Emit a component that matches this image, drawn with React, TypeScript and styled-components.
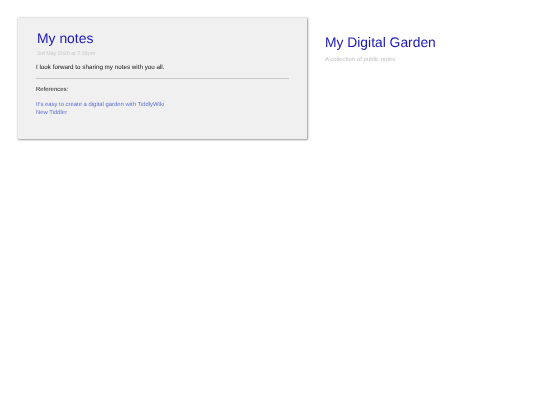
import React from "react";
import styled, { createGlobalStyle } from "styled-components";

const GlobalStyle = createGlobalStyle`
  html, body {
    margin: 0;
    padding: 0;
    background: #fff;
    font-family: "Liberation Sans", Arial, sans-serif;
    text-rendering: geometricPrecision;
  }
`;

const Page = styled.div`
  display: flex;
  align-items: flex-start;
  min-height: 405px;
  box-sizing: border-box;
  padding: 18px 0 0 18px;
  filter: blur(0.25px);
`;

const Card = styled.article`
  box-sizing: border-box;
  width: 289px;
  height: 121px;
  padding: 11px 18px 0 18px;
  background: #f0f0f0;
  border-radius: 1px;
  box-shadow: 0.5px 0.5px 2px rgba(0, 0, 0, 0.4);
`;

const Title = styled.h1`
  margin: 0 0 0 1px;
  font-size: 13.9px;
  line-height: 18px;
  font-weight: 400;
  color: #1a17b8;
`;

const Meta = styled.div`
  margin: 4px 0 0 1px;
  font-size: 5.37px;
  line-height: 6px;
  color: #c8c8c8;
`;

const Body = styled.p`
  margin: 7px 0 0;
  font-size: 6.28px;
  line-height: 7px;
  color: #111;
`;

const Rule = styled.hr`
  margin: 7px 0 0;
  border: 0;
  border-top: 1px solid #c8c8c8;
  width: 253px;
`;

const RefLabel = styled.div`
  margin: 8px 0 0;
  font-size: 5.97px;
  line-height: 7px;
  color: #222;
`;

const RefList = styled.div`
  display: flex;
  flex-direction: column;
  align-items: flex-start;
  margin-top: 7px;
`;

const RefLink = styled.a`
  font-size: 5.9px;
  line-height: 8.3px;
  color: #5b6fd6;
  text-decoration: none;
`;

const Side = styled.aside`
  margin-left: 18px;
  padding-top: 15px;
`;

const SiteTitle = styled.h2`
  margin: 0;
  font-size: 13.85px;
  line-height: 18px;
  font-weight: 400;
  color: #1a17b8;
`;

const SiteSub = styled.div`
  margin-top: 6px;
  font-size: 5.97px;
  line-height: 7px;
  color: #bdbdbd;
`;

export default function App() {
  return (
    <>
      <GlobalStyle />
      <Page>
        <Card>
          <Title>My notes</Title>
          <Meta>3rd May 2020 at 7:39pm</Meta>
          <Body>I look forward to sharing my notes with you all.</Body>
          <Rule />
          <RefLabel>References:</RefLabel>
          <RefList>
            <RefLink href="#">It's easy to create a digital garden with TiddlyWiki</RefLink>
            <RefLink href="#">New Tiddler</RefLink>
          </RefList>
        </Card>
        <Side>
          <SiteTitle>My Digital Garden</SiteTitle>
          <SiteSub>A collection of public notes</SiteSub>
        </Side>
      </Page>
    </>
  );
}
